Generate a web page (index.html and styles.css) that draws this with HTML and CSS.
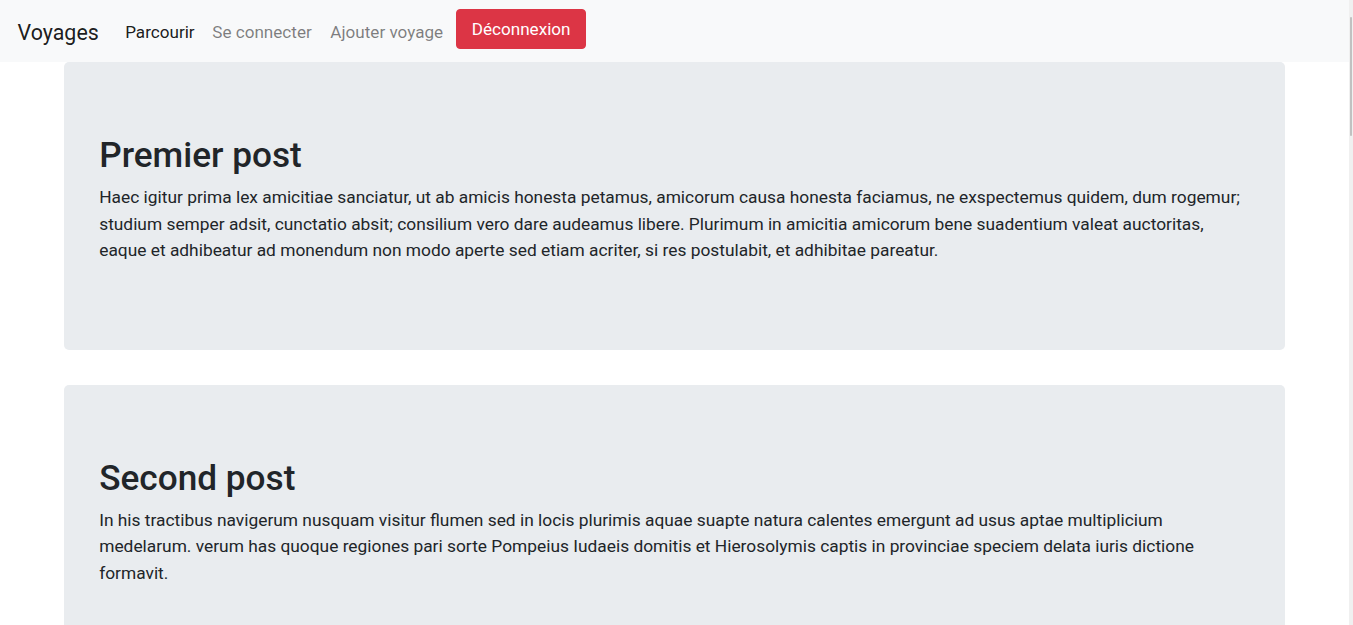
FILE: index.html
```html
<!DOCTYPE html>
<html lang="fr">
<head>
<meta charset="utf-8">
<title>Voyages</title>
<link rel="stylesheet" href="styles.css">
</head>
<body>
<nav class="navbar">
  <a class="brand" href="#">Voyages</a>
  <ul class="nav">
    <li><a class="nav-link active" href="#">Parcourir</a></li>
    <li><a class="nav-link" href="#">Se connecter</a></li>
    <li><a class="nav-link nav-link-last" href="#">Ajouter voyage</a></li>
    <li><button class="btn-danger" type="button">Déconnexion</button></li>
  </ul>
</nav>
<main class="posts">
  <section class="jumbotron">
    <h1 class="post-title">Premier post</h1>
    <p class="post-text">Haec igitur prima lex amicitiae sanciatur, ut ab amicis honesta petamus, amicorum causa honesta faciamus, ne exspectemus quidem, dum rogemur; studium semper adsit, cunctatio absit; consilium vero dare audeamus libere. Plurimum in amicitia amicorum bene suadentium valeat auctoritas, eaque et adhibeatur ad monendum non modo aperte sed etiam acriter, si res postulabit, et adhibitae pareatur.</p>
  </section>
  <section class="jumbotron">
    <h1 class="post-title">Second post</h1>
    <p class="post-text">In his tractibus navigerum nusquam visitur flumen sed in locis plurimis aquae suapte natura calentes emergunt ad usus aptae multiplicium medelarum. verum has quoque regiones pari sorte Pompeius Iudaeis domitis et Hierosolymis captis in provinciae speciem delata iuris dictione formavit.</p>
  </section>
</main>
<div class="scrollbar" aria-hidden="true"><div class="scrollbar-thumb"></div></div>
</body>
</html>
```

FILE: styles.css
```css
html {
  font-size: 17.6px;
}
body {
  margin: 0 4px 0 0;
  font-family: Roboto, "Liberation Sans", sans-serif;
  font-size: 17.35px;
  line-height: 1.5;
  color: #212529;
  background: #fff;
  overflow: hidden;
}
.navbar {
  display: flex;
  align-items: center;
  height: 62px;
  box-sizing: border-box;
  padding: 0 17.6px;
  background: #f8f9fa;
  font-size: 17.1px;
}
.brand {
  font-size: 21.4px;
  line-height: 33px;
  color: rgba(0, 0, 0, 0.9);
  text-decoration: none;
  margin-right: 17.6px;
  padding-top: 3px;
}
.nav {
  display: flex;
  align-items: center;
  list-style: none;
  margin: 0;
  padding: 0;
}
.nav-link {
  display: block;
  padding: 8.8px;
  padding-top: 11px;
  line-height: 26.4px;
  color: rgba(0, 0, 0, 0.5);
  text-decoration: none;
}
.nav-link-last {
  padding-left: 9.8px;
  padding-right: 13px;
}
.nav-link.active {
  color: rgba(0, 0, 0, 0.9);
}
.btn-danger {
  display: block;
  height: 40px;
  margin-top: -4px;
  padding: 0 14.6px;
  font-family: inherit;
  font-size: 17.1px;
  color: #fff;
  background: #dc3545;
  border: 1px solid #dc3545;
  border-radius: 4px;
}
.posts {
  padding: 0 64px;
}
.jumbotron {
  background: #e9ecef;
  border-radius: 5px;
  padding: 70.4px 35.2px 69px;
  margin-bottom: 34.4px;
}
.post-title {
  margin: 0 0 6px;
  font-size: 35.2px;
  font-weight: 500;
  line-height: 46px;
}
.post-text {
  margin: 0 0 17.6px;
  line-height: 26.4px;
}
.scrollbar {
  position: fixed;
  top: 0;
  right: 0;
  width: 4px;
  height: 100vh;
  background: #f0f0f0;
}
.scrollbar-thumb {
  margin: 17px 0 0 1px;
  width: 2px;
  height: 119px;
  background: #c1c1c1;
  border-radius: 1px;
}
```
